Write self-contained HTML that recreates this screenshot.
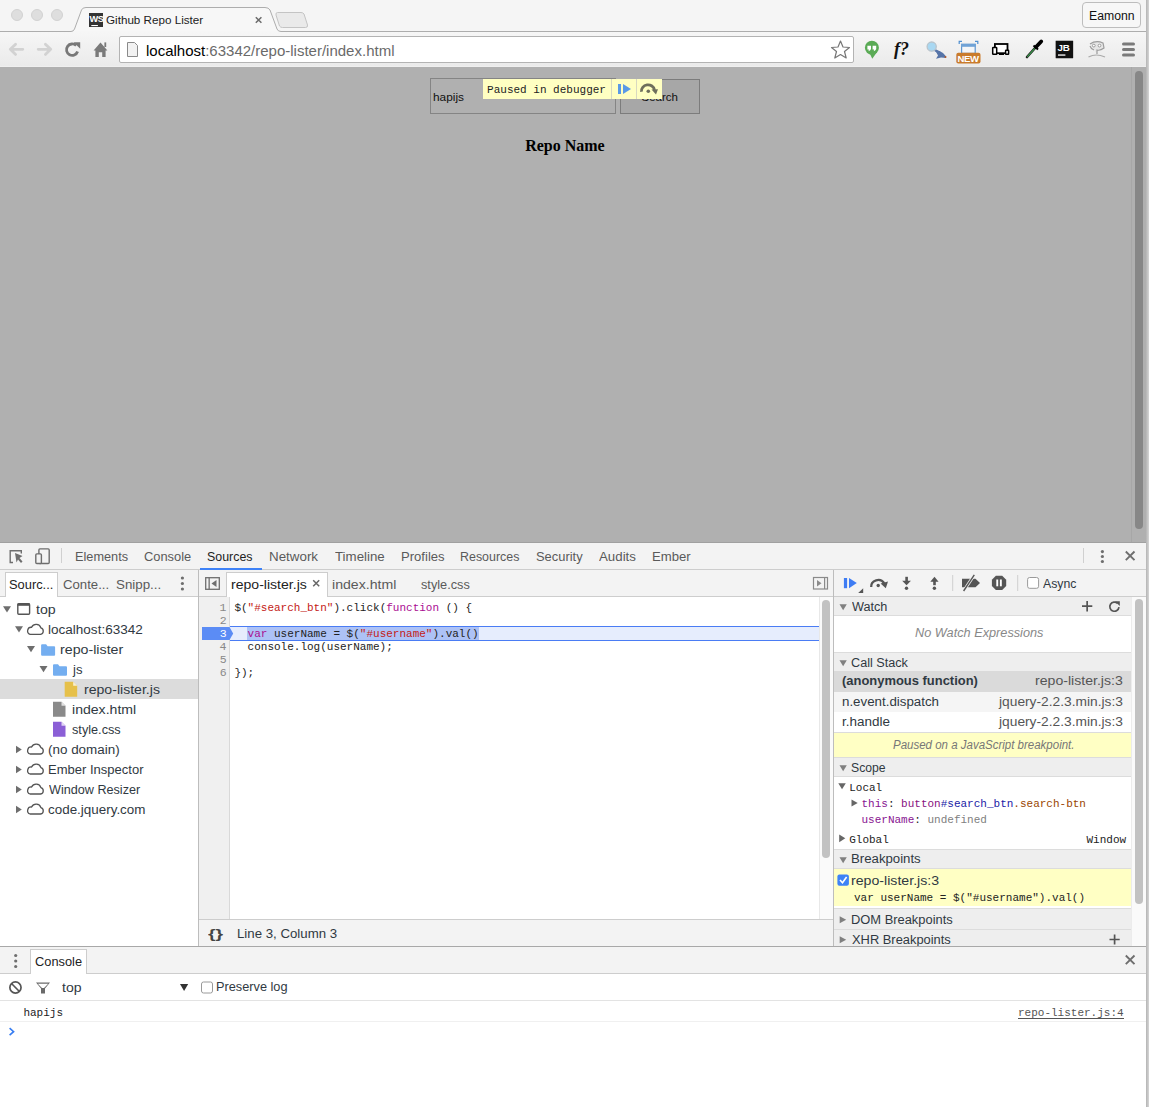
<!DOCTYPE html>
<html><head><meta charset="utf-8">
<style>
*{box-sizing:border-box}
html,body{margin:0;padding:0;width:1149px;height:1107px;overflow:hidden;background:#fff;font-family:"Liberation Sans",sans-serif}
.a{position:absolute}
.t{position:absolute;white-space:pre;line-height:1}
svg{position:absolute;overflow:visible}
.mono{font-family:'Liberation Mono',monospace}
.serif{font-family:'Liberation Serif',serif}
</style></head><body>

<!-- BROWSER CHROME -->
<div class="a" style="left:0;top:0;width:1146px;height:32px;background:#f5f5f5"></div>
<div class="a" style="left:11px;top:9px;width:12px;height:12px;border-radius:50%;background:#dedede;border:1px solid #d2d2d2"></div>
<div class="a" style="left:31px;top:9px;width:12px;height:12px;border-radius:50%;background:#dedede;border:1px solid #d2d2d2"></div>
<div class="a" style="left:51px;top:9px;width:12px;height:12px;border-radius:50%;background:#dedede;border:1px solid #d2d2d2"></div>
<svg style="left:0;top:0" width="1149" height="33">
  <path d="M0 31.5 H71 Q73.5 31.5 74.5 29 L81.5 10 Q82.5 7.5 86 7.5 H265 Q268.5 7.5 270 10 L277 29 Q278 31.5 281 31.5 H1146" fill="#f7f7f7" stroke="#adadad" stroke-width="1"/>
  <path d="M277.5 12.5 H301 Q303 12.5 304 14 L307.5 25 Q308 27.5 305.5 27.5 H282.5 Q280.5 27.5 279.5 26 L276 15 Q275.5 12.5 277.5 12.5 Z" fill="#eaeaea" stroke="#c4c4c4" stroke-width="1"/>
  <rect x="89" y="13" width="14" height="14" fill="#333"/>
  <text x="89.6" y="21.8" font-family="Liberation Sans" font-weight="bold" font-size="9.2" letter-spacing="-0.6" fill="#fff">WS</text>
  <rect x="91.3" y="25" width="6.6" height="1.1" fill="#fff"/>
  <path d="M255.8 17.2 L261.4 22.8 M261.4 17.2 L255.8 22.8" stroke="#6a6a6a" stroke-width="1.5"/>
</svg>
<div class="a" style="left:1082px;top:2px;width:59px;height:26px;border:1px solid #bdbdbd;border-radius:4px;background:#f7f7f7"></div>
<div class="a" style="left:0;top:32px;width:1146px;height:35px;background:linear-gradient(#f6f6f6,#eaeaea)"></div>
<div class="a" style="left:0;top:66px;width:1146px;height:1px;background:#efefef"></div>
<svg style="left:0;top:0" width="120" height="67">
  <g stroke="#d2d2d2" stroke-width="2.8" fill="none" stroke-linecap="round" stroke-linejoin="round">
    <path d="M10.3 49.3 H22.8 M15.6 44.2 L10.3 49.3 L15.6 54.4"/>
    <path d="M38.2 49.3 H50.7 M45.4 44.2 L50.7 49.3 L45.4 54.4"/>
  </g>
  <path d="M76.2 45.6 A5.7 5.7 0 1 0 77.6 51.5" stroke="#777" stroke-width="2.8" fill="none"/>
  <path d="M73.6 42.2 L80.2 42.2 L80.2 48.8 Z" fill="#777"/>
  <path d="M93.6 50.6 L100.5 42.6 L107.4 50.6 H105.6 V57 H102.2 V52.3 H98.8 V57 H95.4 V50.6 Z" fill="#7a7a7a"/>
  <rect x="104.4" y="42.4" width="1.8" height="4.6" fill="#7a7a7a"/>
</svg>
<div class="a" style="left:119px;top:36px;width:735px;height:27px;background:#fff;border:1px solid #b3b3b3;border-radius:2px"></div>
<svg style="left:126px;top:41px" width="14" height="17">
  <path d="M1.5 1.5 H8.5 L11.5 4.5 V15.5 H1.5 Z" fill="#f2f2f2" stroke="#8a8a8a" stroke-width="1"/>
</svg>
<svg style="left:830px;top:39px" width="22" height="21">
  <path d="M10.5 2 L13 8 L19.5 8.5 L14.5 12.5 L16.2 19 L10.5 15.5 L4.8 19 L6.5 12.5 L1.5 8.5 L8 8 Z" fill="#fff" stroke="#777" stroke-width="1.2" stroke-linejoin="round"/>
</svg>
<svg style="left:0;top:0" width="1146" height="67">
  <!-- hangouts -->
  <circle cx="871.9" cy="47.7" r="7" fill="#5aaa55"/>
  <path d="M869.5 53 L872.3 58.7 L877 52 Z" fill="#5aaa55"/>
  <path d="M867.4 45.8 H871 V49 Q870.6 50.6 868.6 51.2 L868.8 49.6 H867.4 Z" fill="#fff"/>
  <path d="M872.6 45.8 H876.2 V49 Q875.8 50.6 873.8 51.2 L874 49.6 H872.6 Z" fill="#fff"/>
  <!-- f? -->
  <text x="894" y="54.6" font-family="Liberation Serif" font-style="italic" font-weight="bold" font-size="18" fill="#111">f?</text>
  <!-- magnifier -->
  <path d="M935 50 Q940 50.5 943 53 Q946 55.5 946 58 L941 57.5 L936 58.7 L938 55.5 Z" fill="#5674a8"/>
  <path d="M934 49.5 L940 53" stroke="#5674a8" stroke-width="2.4"/>
  <circle cx="931.7" cy="46.6" r="4.6" fill="#a9d8f2" stroke="#b9c4cc" stroke-width="1.3"/>
  <circle cx="945.5" cy="57" r="1" fill="#b0582a"/>
  <!-- NEW -->
  <path d="M959.2 44 V41.3 H962" fill="none" stroke="#4f8fd0" stroke-width="1.2"/>
  <path d="M975 41.3 H977.8 V44" fill="none" stroke="#4f8fd0" stroke-width="1.2"/>
  <rect x="961.6" y="44.4" width="13.6" height="9" fill="#f4f6f8" stroke="#5f97cf" stroke-width="1.2"/>
  <rect x="961" y="43.8" width="14.8" height="3" fill="#6fa2d6"/>
  <rect x="956.3" y="52.8" width="24.2" height="10.6" rx="2" fill="#c97b2c"/>
  <text x="957.4" y="61.9" font-family="Liberation Sans" font-weight="bold" font-size="9.6" letter-spacing="-0.3" fill="#fff">NEW</text>
  <!-- devices -->
  <rect x="994.9" y="44" width="12.6" height="9.2" fill="#fff" stroke="#000" stroke-width="1.8"/>
  <rect x="992.7" y="47.5" width="4" height="6.8" rx="0.6" fill="#fff" stroke="#000" stroke-width="1.5"/>
  <rect x="1005.6" y="50.3" width="3" height="4" rx="0.5" fill="#fff" stroke="#000" stroke-width="1.5"/>
  <path d="M999 54.3 H1004 M1001.5 53 V54.5" stroke="#000" stroke-width="1.3"/>
  <!-- eyedropper -->
  <path d="M1027 57 L1035.5 47.5" stroke="#222" stroke-width="2.6" stroke-linecap="round"/>
  <path d="M1027.2 56.8 L1035.2 47.8" stroke="#3a9a4a" stroke-width="1.2"/>
  <path d="M1033.5 45.5 L1038 49.5" stroke="#000" stroke-width="2"/>
  <path d="M1036 47 L1041.2 41.5" stroke="#000" stroke-width="3.8" stroke-linecap="round"/>
  <!-- JB -->
  <rect x="1055" y="40.2" width="18.8" height="18.6" fill="#fff"/>
  <rect x="1055.6" y="40.7" width="17.6" height="17.6" fill="#111"/>
  <text x="1057.6" y="50.9" font-family="Liberation Sans" font-weight="bold" font-size="9.8" letter-spacing="-0.2" fill="#fff">JB</text>
  <rect x="1058" y="54.4" width="7.4" height="1.3" fill="#fff"/>
  <!-- elephant -->
  <path d="M1090 44 Q1096 40 1103 43 L1104 48 Q1100 51 1097 50 L1097 54 M1094 50 Q1091 49 1090 46" fill="#e6e6e6" stroke="#9c9c9c" stroke-width="1.2"/>
  <circle cx="1093.8" cy="45.6" r="1.4" fill="#fff" stroke="#8a8a8a" stroke-width="0.8"/>
  <circle cx="1099.5" cy="45.6" r="1.4" fill="#fff" stroke="#8a8a8a" stroke-width="0.8"/>
  <path d="M1088.5 57 Q1096 53 1105 57" stroke="#aaa" stroke-width="1.2" fill="none"/>
  <!-- hamburger -->
  <rect x="1122" y="42.5" width="13" height="3" rx="1.5" fill="#7a7a7a"/>
  <rect x="1122" y="48" width="13" height="3" rx="1.5" fill="#7a7a7a"/>
  <rect x="1122" y="53.5" width="13" height="3" rx="1.5" fill="#7a7a7a"/>
</svg>
<div class="a" style="left:1146px;top:0;width:3px;height:1107px;background:linear-gradient(90deg,#b4b4b4,#d6d6d6)"></div>

<div class="t" style="left:106.02px;top:14.5px;font-family:'Liberation Sans',sans-serif;font-size:11.5px;color:#222;transform:scaleX(1.0136);transform-origin:0 0">Github Repo Lister</div>
<div class="t" style="left:1088.62px;top:9.899999999999999px;font-family:'Liberation Sans',sans-serif;font-size:12px;color:#111;transform:scaleX(1.0196);transform-origin:0 0">Eamonn</div>
<div class="t" style="left:146px;top:43px;font-size:15px;color:#000">localhost<span style="color:#6a6a6a">:63342/repo-lister/index.html</span></div>
<div class="a" style="left:0;top:67px;width:1146px;height:476px;background:#b0b0b0"></div>
<div class="a" style="left:1131px;top:67px;width:1px;height:476px;background:#a7a7a7"></div>
<div class="a" style="left:1135px;top:71px;width:8px;height:458px;border-radius:4px;background:#878787"></div>
<div class="a" style="left:430px;top:78px;width:186px;height:36px;border:1px solid #848484;background:#b0b0b0"></div>
<div class="a" style="left:620px;top:79px;width:80px;height:35px;border:1px solid #7c7c7c;background:#a7a7a7"></div>

<div class="t" style="left:432.67px;top:91.9px;font-family:'Liberation Sans',sans-serif;font-size:11.5px;color:#111;transform:scaleX(1.0324);transform-origin:0 0">hapijs</div>
<div class="t" style="left:641.48px;top:91.9px;font-family:'Liberation Sans',sans-serif;font-size:11.5px;color:#111">Search</div>
<div class="t" style="left:525.16px;top:137.9px;font-family:'Liberation Serif',serif;font-size:16px;color:#000;font-weight:bold">Repo Name</div>
<div class="a" style="left:483px;top:79px;width:179px;height:20px;background:#ffffc2"></div>
<div class="a" style="left:611px;top:79px;width:1px;height:20px;background:#d8d8c0"></div>
<div class="a" style="left:636px;top:79px;width:1px;height:20px;background:#d8d8c0"></div>
<svg style="left:612px;top:79px" width="50" height="20">
  <rect x="6" y="5" width="3" height="10" fill="#5a9ae6"/>
  <path d="M11 5 L19 10 L11 15 Z" fill="#5a9ae6"/>
  <path d="M29.5 12.8 A6.5 6 0 0 1 42.5 11" stroke="#6e6e5c" stroke-width="2.8" fill="none"/>
  <path d="M39.5 10.5 L46 10.2 L44 15.5 Z" fill="#6e6e5c"/>
  <circle cx="36.3" cy="12.2" r="1.8" fill="#6e6e5c"/>
</svg>
<div class="t" style="left:487.12px;top:85px;font-family:'Liberation Mono',monospace;font-size:11px;color:#222">Paused in debugger</div>
<div class="a" style="left:0px;top:542px;width:1146px;height:1px;background:#a0a0a0;"></div>
<div class="a" style="left:0px;top:543px;width:1146px;height:26px;background:#f3f3f3;"></div>
<div class="a" style="left:0px;top:569px;width:1146px;height:1px;background:#cdcdcd;"></div>
<svg style="left:0;top:543px" width="1146" height="27">
 <g fill="none" stroke="#6e6e6e" stroke-width="1.4">
  <path d="M13 19.5 H10.2 V7.7 H21.3 V10.5"/>
 </g>
 <path d="M15 10 L22.5 13 L19.5 15 L22.5 18.5 L21 20 L18 16.5 L16.5 19.5 Z" fill="#6e6e6e"/>
 <rect x="38.9" y="5.9" width="10.3" height="14.6" rx="1" fill="none" stroke="#6e6e6e" stroke-width="1.4"/>
 <rect x="35.8" y="10.9" width="5.6" height="9.6" rx="1" fill="#f3f3f3" stroke="#6e6e6e" stroke-width="1.4"/>
 <rect x="61" y="5" width="1" height="15" fill="#d0d0d0"/>
 <rect x="1083" y="5" width="1" height="15" fill="#d0d0d0"/>
 <circle cx="1102.4" cy="8.6" r="1.6" fill="#6e6e6e"/><circle cx="1102.4" cy="13.5" r="1.6" fill="#6e6e6e"/><circle cx="1102.4" cy="18.5" r="1.6" fill="#6e6e6e"/>
 <path d="M1125.8 8.5 L1134.5 17.2 M1134.5 8.5 L1125.8 17.2" stroke="#6e6e6e" stroke-width="1.9"/>
</svg>
<div class="a" style="left:200px;top:568px;width:62px;height:2px;background:#3e82f7;"></div>
<div class="t" style="left:75.18px;top:551px;font-family:'Liberation Sans',sans-serif;font-size:12.5px;color:#5a5a5a;transform:scaleX(1.0180);transform-origin:0 0">Elements</div>
<div class="t" style="left:144.36px;top:551px;font-family:'Liberation Sans',sans-serif;font-size:12.5px;color:#5a5a5a;transform:scaleX(1.0294);transform-origin:0 0">Console</div>
<div class="t" style="left:207.44px;top:551px;font-family:'Liberation Sans',sans-serif;font-size:12.5px;color:#222;transform:scaleX(0.9916);transform-origin:0 0">Sources</div>
<div class="t" style="left:268.93px;top:551px;font-family:'Liberation Sans',sans-serif;font-size:12.5px;color:#5a5a5a;transform:scaleX(1.0696);transform-origin:0 0">Network</div>
<div class="t" style="left:335.03px;top:551px;font-family:'Liberation Sans',sans-serif;font-size:12.5px;color:#5a5a5a;transform:scaleX(1.0623);transform-origin:0 0">Timeline</div>
<div class="t" style="left:401.05px;top:551px;font-family:'Liberation Sans',sans-serif;font-size:12.5px;color:#5a5a5a;transform:scaleX(1.0460);transform-origin:0 0">Profiles</div>
<div class="t" style="left:460.41px;top:551px;font-family:'Liberation Sans',sans-serif;font-size:12.5px;color:#5a5a5a;transform:scaleX(0.9946);transform-origin:0 0">Resources</div>
<div class="t" style="left:536.42px;top:551px;font-family:'Liberation Sans',sans-serif;font-size:12.5px;color:#5a5a5a;transform:scaleX(1.0323);transform-origin:0 0">Security</div>
<div class="t" style="left:599.00px;top:551px;font-family:'Liberation Sans',sans-serif;font-size:12.5px;color:#5a5a5a;transform:scaleX(1.0638);transform-origin:0 0">Audits</div>
<div class="t" style="left:651.95px;top:551px;font-family:'Liberation Sans',sans-serif;font-size:12.5px;color:#5a5a5a;transform:scaleX(1.0517);transform-origin:0 0">Ember</div>
<div class="a" style="left:0px;top:570px;width:198px;height:26px;background:#f3f3f3;"></div>
<div class="a" style="left:0px;top:596px;width:198px;height:1px;background:#cdcdcd;"></div>
<div class="a" style="left:198px;top:570px;width:1px;height:377px;background:#bdbdbd;"></div>
<div class="a" style="left:5px;top:572px;width:53px;height:25px;background:#fff;border:1px solid #cdcdcd;border-bottom:none"></div>
<div class="t" style="left:8.82px;top:579px;font-family:'Liberation Sans',sans-serif;font-size:12.5px;color:#222;transform:scaleX(1.0296);transform-origin:0 0">Sourc...</div>
<div class="t" style="left:62.64px;top:579px;font-family:'Liberation Sans',sans-serif;font-size:12.5px;color:#5a5a5a;transform:scaleX(1.0548);transform-origin:0 0">Conte...</div>
<div class="t" style="left:116.40px;top:579px;font-family:'Liberation Sans',sans-serif;font-size:12.5px;color:#5a5a5a;transform:scaleX(1.0667);transform-origin:0 0">Snipp...</div>
<svg style="left:0;top:570px" width="198" height="27">
 <circle cx="182.4" cy="8" r="1.6" fill="#6e6e6e"/><circle cx="182.4" cy="13.5" r="1.6" fill="#6e6e6e"/><circle cx="182.4" cy="19" r="1.6" fill="#6e6e6e"/>
</svg>
<div class="a" style="left:0px;top:597px;width:198px;height:350px;background:#fff;"></div>
<div class="a" style="left:0px;top:679px;width:198px;height:20px;background:#dcdcdc;"></div>
<svg style="left:0;top:0" width="198" height="1107">
<path d="M3 606.2 H11 L7.0 612.5 Z" fill="#6e6e6e"/>
<rect x="17.8" y="603.8" width="11.8" height="10.4" rx="1" fill="none" stroke="#555" stroke-width="1.4"/><rect x="17.5" y="603.5" width="12.5" height="2.3" fill="#555"/>
<path d="M15 626.2 H23 L19.0 632.4 Z" fill="#6e6e6e"/>
<path transform="translate(26.1,623.3)" d="M4 11 H14.5 A3.3 3.3 0 0 0 14.8 4.6 A5 5 0 0 0 5.5 4 A3.6 3.6 0 0 0 4 11 Z" fill="none" stroke="#555" stroke-width="1.3"/>
<path d="M27 646.1 H35 L31.0 652.2 Z" fill="#6e6e6e"/>
<path transform="translate(41.1,644.2)" d="M0 1 Q0 0 1 0 H5 L6.5 2 H13 Q14 2 14 3 V10.5 Q14 11.5 13 11.5 H1 Q0 11.5 0 10.5 Z" fill="#74aef0"/>
<path d="M39.5 666.1 H47.5 L43.5 672.2 Z" fill="#6e6e6e"/>
<path transform="translate(53,664.2)" d="M0 1 Q0 0 1 0 H5 L6.5 2 H13 Q14 2 14 3 V10.5 Q14 11.5 13 11.5 H1 Q0 11.5 0 10.5 Z" fill="#74aef0"/>
<g transform="translate(64.7,681.7)"><path d="M0 0 H8.5 L12.5 4 V15 H0 Z" fill="#e6c04a"/><path d="M8.5 0 V4 H12.5 Z" fill="#fff" opacity="0.75"/></g>
<g transform="translate(53,701.7)"><path d="M0 0 H8.5 L12.5 4 V15 H0 Z" fill="#8a8a8a"/><path d="M8.5 0 V4 H12.5 Z" fill="#fff" opacity="0.75"/></g>
<g transform="translate(53,721.7)"><path d="M0 0 H8.5 L12.5 4 V15 H0 Z" fill="#8b5fd6"/><path d="M8.5 0 V4 H12.5 Z" fill="#fff" opacity="0.75"/></g>
<path d="M16 745.7 L21.8 749.5 L16 753.3 Z" fill="#6e6e6e"/>
<path transform="translate(26.1,743.0)" d="M4 11 H14.5 A3.3 3.3 0 0 0 14.8 4.6 A5 5 0 0 0 5.5 4 A3.6 3.6 0 0 0 4 11 Z" fill="none" stroke="#555" stroke-width="1.3"/>
<path d="M16 765.7 L21.8 769.5 L16 773.3 Z" fill="#6e6e6e"/>
<path transform="translate(26.1,763.0)" d="M4 11 H14.5 A3.3 3.3 0 0 0 14.8 4.6 A5 5 0 0 0 5.5 4 A3.6 3.6 0 0 0 4 11 Z" fill="none" stroke="#555" stroke-width="1.3"/>
<path d="M16 785.7 L21.8 789.5 L16 793.3 Z" fill="#6e6e6e"/>
<path transform="translate(26.1,783.0)" d="M4 11 H14.5 A3.3 3.3 0 0 0 14.8 4.6 A5 5 0 0 0 5.5 4 A3.6 3.6 0 0 0 4 11 Z" fill="none" stroke="#555" stroke-width="1.3"/>
<path d="M16 805.7 L21.8 809.5 L16 813.3 Z" fill="#6e6e6e"/>
<path transform="translate(26.1,803.0)" d="M4 11 H14.5 A3.3 3.3 0 0 0 14.8 4.6 A5 5 0 0 0 5.5 4 A3.6 3.6 0 0 0 4 11 Z" fill="none" stroke="#555" stroke-width="1.3"/>
</svg>
<div class="t" style="left:36.29px;top:604px;font-family:'Liberation Sans',sans-serif;font-size:12.5px;color:#303942;transform:scaleX(1.1326);transform-origin:0 0">top</div>
<div class="t" style="left:47.82px;top:624px;font-family:'Liberation Sans',sans-serif;font-size:12.5px;color:#303942;transform:scaleX(1.0821);transform-origin:0 0">localhost:63342</div>
<div class="t" style="left:59.68px;top:644px;font-family:'Liberation Sans',sans-serif;font-size:12.5px;color:#303942;transform:scaleX(1.1381);transform-origin:0 0">repo-lister</div>
<div class="t" style="left:72.53px;top:664px;font-family:'Liberation Sans',sans-serif;font-size:12.5px;color:#303942;transform:scaleX(1.0479);transform-origin:0 0">js</div>
<div class="t" style="left:83.88px;top:684px;font-family:'Liberation Sans',sans-serif;font-size:12.5px;color:#303942;transform:scaleX(1.1267);transform-origin:0 0">repo-lister.js</div>
<div class="t" style="left:71.68px;top:704px;font-family:'Liberation Sans',sans-serif;font-size:12.5px;color:#303942;transform:scaleX(1.1263);transform-origin:0 0">index.html</div>
<div class="t" style="left:72.22px;top:724px;font-family:'Liberation Sans',sans-serif;font-size:12.5px;color:#303942;transform:scaleX(1.0164);transform-origin:0 0">style.css</div>
<div class="t" style="left:47.79px;top:744px;font-family:'Liberation Sans',sans-serif;font-size:12.5px;color:#303942;transform:scaleX(1.0738);transform-origin:0 0">(no domain)</div>
<div class="t" style="left:47.56px;top:764px;font-family:'Liberation Sans',sans-serif;font-size:12.5px;color:#303942;transform:scaleX(1.0420);transform-origin:0 0">Ember Inspector</div>
<div class="t" style="left:48.54px;top:784px;font-family:'Liberation Sans',sans-serif;font-size:12.5px;color:#303942;transform:scaleX(1.0100);transform-origin:0 0">Window Resizer</div>
<div class="t" style="left:48.06px;top:804px;font-family:'Liberation Sans',sans-serif;font-size:12.5px;color:#303942;transform:scaleX(1.0737);transform-origin:0 0">code.jquery.com</div>
<div class="a" style="left:199px;top:570px;width:634px;height:26px;background:#f3f3f3;"></div>
<div class="a" style="left:199px;top:596px;width:634px;height:1px;background:#cdcdcd;"></div>
<div class="a" style="left:226px;top:572px;width:102px;height:25px;background:#fff;border:1px solid #cdcdcd;border-bottom:none"></div>
<div class="t" style="left:230.69px;top:579px;font-family:'Liberation Sans',sans-serif;font-size:12.5px;color:#222;transform:scaleX(1.1251);transform-origin:0 0">repo-lister.js</div>
<div class="t" style="left:332.38px;top:579px;font-family:'Liberation Sans',sans-serif;font-size:12.5px;color:#5a5a5a;transform:scaleX(1.1281);transform-origin:0 0">index.html</div>
<div class="t" style="left:421.02px;top:579px;font-family:'Liberation Sans',sans-serif;font-size:12.5px;color:#5a5a5a;transform:scaleX(1.0186);transform-origin:0 0">style.css</div>
<svg style="left:0;top:0" width="840" height="600">
 <rect x="205.7" y="577.7" width="13.6" height="11.6" fill="none" stroke="#6e6e6e" stroke-width="1.3"/>
 <rect x="208.5" y="577.7" width="1.3" height="11.6" fill="#6e6e6e"/>
 <path d="M216.5 580 V587 L211.5 583.5 Z" fill="#6e6e6e"/>
 <path d="M313.2 580.2 L319.2 586.2 M319.2 580.2 L313.2 586.2" stroke="#666" stroke-width="1.5"/>
 <rect x="813.5" y="577.5" width="14" height="11.5" fill="none" stroke="#8a8a8a" stroke-width="1.2"/>
 <rect x="824" y="577.5" width="1.2" height="11.5" fill="#8a8a8a"/>
 <path d="M817 580 V586.5 L821.5 583.25 Z" fill="#8a8a8a"/>
</svg>
<div class="a" style="left:199px;top:597px;width:634px;height:322px;background:#fff;"></div>
<div class="a" style="left:199px;top:597px;width:30px;height:322px;background:#f0f0f0;"></div>
<div class="a" style="left:229px;top:597px;width:1px;height:322px;background:#d9d9d9;"></div>
<div class="a" style="left:230px;top:626px;width:589px;height:15px;background:#e6edfd;border-top:1px solid #4a7cf4;border-bottom:1px solid #4a7cf4"></div>
<div class="a" style="left:247px;top:627px;width:232px;height:13px;background:#adc2f6;"></div>
<svg style="left:0;top:0" width="840" height="700">
 <path d="M202 627 H229.5 L233.2 633.5 L229.5 640 H202 Z" fill="#5b8cf5"/>
</svg>
<div class="a" style="left:819px;top:597px;width:14px;height:322px;background:#fafafa;border-left:1px solid #e8e8e8"></div>
<div class="a" style="left:822px;top:600px;width:8px;height:258px;background:#c2c2c2;border-radius:4px"></div>
<div class="t" style="left:219.58px;top:602px;font-family:'Liberation Mono',monospace;font-size:11.5px;color:#888">1</div>
<div class="t" style="left:219.81px;top:615px;font-family:'Liberation Mono',monospace;font-size:11.5px;color:#888">2</div>
<div class="t" style="left:219.75px;top:628px;font-family:'Liberation Mono',monospace;font-size:11.5px;color:#fff">3</div>
<div class="t" style="left:219.58px;top:641px;font-family:'Liberation Mono',monospace;font-size:11.5px;color:#888">4</div>
<div class="t" style="left:219.75px;top:654px;font-family:'Liberation Mono',monospace;font-size:11.5px;color:#888">5</div>
<div class="t" style="left:219.75px;top:667px;font-family:'Liberation Mono',monospace;font-size:11.5px;color:#888">6</div>
<div class="t" style="left:234.4px;top:603px;font-family:'Liberation Mono',monospace;font-size:11px;color:#222">$(<span style="color:#c41a16">"#search_btn"</span>).click(<span style="color:#aa0d91">function</span> () {</div>
<div class="t" style="left:234.4px;top:616px;font-family:'Liberation Mono',monospace;font-size:11px;color:#222"></div>
<div class="t" style="left:234.4px;top:629px;font-family:'Liberation Mono',monospace;font-size:11px;color:#222">  <span style="color:#aa0d91">var</span> userName = $(<span style="color:#c41a16">"#username"</span>).val()</div>
<div class="t" style="left:234.4px;top:642px;font-family:'Liberation Mono',monospace;font-size:11px;color:#222">  console.log(userName);</div>
<div class="t" style="left:234.4px;top:655px;font-family:'Liberation Mono',monospace;font-size:11px;color:#222"></div>
<div class="t" style="left:234.4px;top:668px;font-family:'Liberation Mono',monospace;font-size:11px;color:#222">});</div>
<div class="a" style="left:199px;top:919px;width:634px;height:1px;background:#cdcdcd;"></div>
<div class="a" style="left:199px;top:920px;width:634px;height:26px;background:#f3f3f3;"></div>
<div class="t" style="left:207.91px;top:927.5px;font-family:'Liberation Sans',sans-serif;font-size:12.5px;color:#444;font-weight:bold;transform:scaleX(1.5573);transform-origin:0 0">{}</div>
<div class="t" style="left:237.44px;top:927.5px;font-family:'Liberation Sans',sans-serif;font-size:12.5px;color:#303942;transform:scaleX(1.0591);transform-origin:0 0">Line 3, Column 3</div>
<div class="a" style="left:833px;top:570px;width:1px;height:377px;background:#bdbdbd;"></div>
<div class="a" style="left:834px;top:570px;width:312px;height:26px;background:#f3f3f3;"></div>
<div class="a" style="left:834px;top:596px;width:312px;height:1px;background:#cdcdcd;"></div>
<svg style="left:0;top:0" width="1146" height="600">
 <rect x="843.9" y="578" width="3.2" height="10.2" fill="#3e7cf3"/>
 <path d="M849 578 L856.8 583.1 L849 588.2 Z" fill="#3e7cf3"/>
 <path d="M858.2 593 L863.2 588.3 V593 Z" fill="#555"/>
 <path d="M871.2 587 A7 6.6 0 0 1 884.2 583.2" fill="none" stroke="#555" stroke-width="2.3"/>
 <path d="M880.6 583.6 L888 581.4 L885.8 588.3 Z" fill="#555"/>
 <circle cx="878.2" cy="585.5" r="1.7" fill="#555"/>
 <rect x="905.3" y="576.8" width="2.6" height="5" fill="#555"/>
 <path d="M902.2 580.8 H910.9 L906.55 585.2 Z" fill="#555"/>
 <circle cx="906.5" cy="588.2" r="1.7" fill="#555"/>
 <path d="M930.3 581.7 H938.6 L934.45 576.8 Z" fill="#555"/>
 <rect x="933.2" y="581" width="2.6" height="4.2" fill="#555"/>
 <circle cx="934.4" cy="588.2" r="1.7" fill="#555"/>
 <rect x="952.2" y="575" width="1" height="16" fill="#cfcfcf"/>
 <path d="M962 578.8 H975.5 L980 583 L975.5 587.3 H962 Z" fill="#555"/>
 <path d="M974.3 574.8 L963.6 591" stroke="#f3f3f3" stroke-width="3"/>
 <path d="M974.3 574.8 L963.6 591" stroke="#555" stroke-width="1.4"/>
 <path d="M995.9 575.7 H1002.2 L1006.2 579.7 V586 L1002.2 590 H995.9 L991.9 586 V579.7 Z" fill="#555"/>
 <rect x="996.3" y="579.5" width="1.9" height="6.8" fill="#fff"/><rect x="999.9" y="579.5" width="1.9" height="6.8" fill="#fff"/>
 <rect x="1017.2" y="575" width="1" height="16" fill="#cfcfcf"/>
 <rect x="1027.6" y="577.5" width="11" height="10.8" rx="2" fill="#fff" stroke="#9a9a9a" stroke-width="1"/>
</svg>
<div class="t" style="left:1043.00px;top:578px;font-family:'Liberation Sans',sans-serif;font-size:12.5px;color:#303942;transform:scaleX(0.9837);transform-origin:0 0">Async</div>
<div class="a" style="left:834px;top:597px;width:297px;height:349px;background:#fff;"></div>
<div class="a" style="left:1131px;top:597px;width:15px;height:349px;background:#fafafa;border-left:1px solid #ececec"></div>
<div class="a" style="left:1135px;top:599px;width:8px;height:305px;background:#c2c2c2;border-radius:4px"></div>
<div class="a" style="left:834px;top:597px;width:297px;height:1px;background:#dcdcdc;"></div>
<div class="a" style="left:834px;top:597px;width:297px;height:18px;background:#eeeeee;"></div>
<div class="a" style="left:834px;top:615px;width:297px;height:1px;background:#dcdcdc;"></div>
<div class="t" style="left:851.94px;top:600.7px;font-family:'Liberation Sans',sans-serif;font-size:12.5px;color:#303942;transform:scaleX(1.0128);transform-origin:0 0">Watch</div>
<div class="a" style="left:834px;top:652px;width:297px;height:1px;background:#dcdcdc;"></div>
<div class="a" style="left:834px;top:653px;width:297px;height:18px;background:#eeeeee;"></div>
<div class="a" style="left:834px;top:671px;width:297px;height:1px;background:#dcdcdc;"></div>
<div class="t" style="left:851.37px;top:657px;font-family:'Liberation Sans',sans-serif;font-size:12.5px;color:#303942;transform:scaleX(1.0121);transform-origin:0 0">Call Stack</div>
<div class="a" style="left:834px;top:671px;width:297px;height:21px;background:#dadada;"></div>
<div class="a" style="left:834px;top:692px;width:297px;height:20px;background:#f5f5f5;"></div>
<div class="a" style="left:834px;top:732px;width:297px;height:1px;background:#dcdcdc;"></div>
<div class="a" style="left:834px;top:733px;width:297px;height:24px;background:#ffffc4;"></div>
<div class="a" style="left:834px;top:757px;width:297px;height:1px;background:#dcdcdc;"></div>
<div class="a" style="left:834px;top:758px;width:297px;height:18px;background:#eeeeee;"></div>
<div class="a" style="left:834px;top:776px;width:297px;height:1px;background:#dcdcdc;"></div>
<div class="t" style="left:851.45px;top:761.7px;font-family:'Liberation Sans',sans-serif;font-size:12.5px;color:#303942;transform:scaleX(0.9763);transform-origin:0 0">Scope</div>
<div class="a" style="left:834px;top:849px;width:297px;height:1px;background:#dcdcdc;"></div>
<div class="a" style="left:834px;top:850px;width:297px;height:18px;background:#eeeeee;"></div>
<div class="a" style="left:834px;top:868px;width:297px;height:1px;background:#dcdcdc;"></div>
<div class="t" style="left:850.94px;top:853.3px;font-family:'Liberation Sans',sans-serif;font-size:12.5px;color:#303942;transform:scaleX(1.0563);transform-origin:0 0">Breakpoints</div>
<div class="a" style="left:834px;top:869px;width:297px;height:37px;background:#ffffc4;"></div>
<div class="a" style="left:834px;top:908px;width:297px;height:1px;background:#dcdcdc;"></div>
<div class="a" style="left:834px;top:909px;width:297px;height:20px;background:#eeeeee;"></div>
<div class="a" style="left:834px;top:929px;width:297px;height:1px;background:#dcdcdc;"></div>
<div class="t" style="left:850.97px;top:913.8px;font-family:'Liberation Sans',sans-serif;font-size:12.5px;color:#303942;transform:scaleX(1.0310);transform-origin:0 0">DOM Breakpoints</div>
<div class="a" style="left:834px;top:929px;width:297px;height:1px;background:#dcdcdc;"></div>
<div class="a" style="left:834px;top:930px;width:297px;height:16px;background:#eeeeee;"></div>
<div class="t" style="left:851.68px;top:933.5px;font-family:'Liberation Sans',sans-serif;font-size:12.5px;color:#303942;transform:scaleX(1.0302);transform-origin:0 0">XHR Breakpoints</div>
<svg style="left:0;top:0" width="1146" height="950">
 <path d="M839.5 604.3 H846.8 L843.15 610.3 Z" fill="#808080"/>
 <path d="M1082 606.2 H1092.3 M1087.15 601 V611.4" stroke="#555" stroke-width="1.7"/>
 <path d="M1117.6 603.3 A4.6 4.6 0 1 0 1119 607.2" fill="none" stroke="#555" stroke-width="1.7"/>
 <path d="M1114.8 601.2 L1119.8 601.2 L1119.8 606 Z" fill="#555"/>
 <path d="M839.5 660.3 H846.8 L843.15 666.3 Z" fill="#808080"/>
 <path d="M839.5 765.3 H846.8 L843.15 771.3 Z" fill="#808080"/>
 <path d="M838.3 783.3 H845.8 L842.05 789.3 Z" fill="#666"/>
 <path d="M851.5 799.4 L857.7 802.9 L851.5 806.4 Z" fill="#666"/>
 <path d="M839.2 834.4 L845.3 838.3 L839.2 842.2 Z" fill="#666"/>
 <path d="M839.5 857.3 H846.8 L843.15 863.3 Z" fill="#808080"/>
 <rect x="837.4" y="874.4" width="11.5" height="11.3" rx="2" fill="#3d82f6"/>
 <path d="M840 880 L842.5 882.8 L846.6 877" fill="none" stroke="#fff" stroke-width="1.6"/>
 <path d="M839.7 916.2 L846.2 919.7 L839.7 923.2 Z" fill="#808080"/>
 <path d="M839.7 936.2 L846.2 939.7 L839.7 943.2 Z" fill="#808080"/>
 <path d="M1109.5 939.5 H1119.7 M1114.6 934.4 V944.6" stroke="#555" stroke-width="1.7"/>
</svg>
<div class="t" style="left:915.42px;top:626.7px;font-family:'Liberation Sans',sans-serif;font-size:12.5px;color:#888;font-style:italic;transform:scaleX(1.0178);transform-origin:0 0">No Watch Expressions</div>
<div class="t" style="left:841.85px;top:675.2px;font-family:'Liberation Sans',sans-serif;font-size:12.5px;color:#303942;font-weight:bold;transform:scaleX(1.0354);transform-origin:0 0">(anonymous function)</div>
<div class="t" style="left:1035.08px;top:675.2px;font-family:'Liberation Sans',sans-serif;font-size:12.5px;color:#555;transform:scaleX(1.1281);transform-origin:0 0">repo-lister.js:3</div>
<div class="t" style="left:841.63px;top:696px;font-family:'Liberation Sans',sans-serif;font-size:12.5px;color:#303942;transform:scaleX(1.0652);transform-origin:0 0">n.event.dispatch</div>
<div class="t" style="left:998.84px;top:696px;font-family:'Liberation Sans',sans-serif;font-size:12.5px;color:#555;transform:scaleX(1.1017);transform-origin:0 0">jquery-2.2.3.min.js:3</div>
<div class="t" style="left:841.62px;top:716px;font-family:'Liberation Sans',sans-serif;font-size:12.5px;color:#303942;transform:scaleX(1.0783);transform-origin:0 0">r.handle</div>
<div class="t" style="left:998.84px;top:716px;font-family:'Liberation Sans',sans-serif;font-size:12.5px;color:#555;transform:scaleX(1.1017);transform-origin:0 0">jquery-2.2.3.min.js:3</div>
<div class="t" style="left:892.96px;top:738.6px;font-family:'Liberation Sans',sans-serif;font-size:12.5px;color:#777;font-style:italic;transform:scaleX(0.9195);transform-origin:0 0">Paused on a JavaScript breakpoint.</div>
<div class="t" style="left:849.2px;top:782.8px;font-family:'Liberation Mono',monospace;font-size:11px;color:#222">Local</div>
<div class="t" style="left:861.5px;top:799px;font-family:'Liberation Mono',monospace;font-size:11px;color:#222"><span style="color:#881391">this</span>: <span style="color:#881280">button</span><span style="color:#1a1aa6">#search_btn</span><span style="color:#994500">.search-btn</span></div>
<div class="t" style="left:861.5px;top:814.8px;font-family:'Liberation Mono',monospace;font-size:11px;color:#222"><span style="color:#881391">userName</span>: <span style="color:#808080">undefined</span></div>
<div class="t" style="left:849.2px;top:834.5px;font-family:'Liberation Mono',monospace;font-size:11px;color:#222">Global</div>
<div class="t" style="left:1086.5px;top:834.5px;font-family:'Liberation Mono',monospace;font-size:11px;color:#222">Window</div>
<div class="t" style="left:851.28px;top:875px;font-family:'Liberation Sans',sans-serif;font-size:12.5px;color:#303942;transform:scaleX(1.1320);transform-origin:0 0">repo-lister.js:3</div>
<div class="t" style="left:854px;top:892.9px;font-family:'Liberation Mono',monospace;font-size:11px;color:#222">var userName = $("#username").val()</div>
<div class="a" style="left:0px;top:946px;width:1146px;height:1px;background:#a8a8a8;"></div>
<div class="a" style="left:0px;top:947px;width:1146px;height:26px;background:#f3f3f3;"></div>
<div class="a" style="left:0px;top:973px;width:1146px;height:1px;background:#cdcdcd;"></div>
<div class="a" style="left:30px;top:949px;width:57px;height:25px;background:#fff;border:1px solid #cdcdcd;border-bottom:none"></div>
<div class="t" style="left:34.56px;top:955.8px;font-family:'Liberation Sans',sans-serif;font-size:12.5px;color:#222;transform:scaleX(1.0249);transform-origin:0 0">Console</div>
<div class="a" style="left:0px;top:974px;width:1146px;height:26px;background:#fff;"></div>
<div class="a" style="left:0px;top:1000px;width:1146px;height:1px;background:#e3e3e3;"></div>
<div class="a" style="left:0px;top:1001px;width:1146px;height:106px;background:#fff;"></div>
<div class="a" style="left:0px;top:1021px;width:1146px;height:1px;background:#f0f0f0;"></div>
<svg style="left:0;top:0" width="1146" height="1107">
 <circle cx="15.7" cy="955.5" r="1.6" fill="#6e6e6e"/><circle cx="15.7" cy="961" r="1.6" fill="#6e6e6e"/><circle cx="15.7" cy="966.5" r="1.6" fill="#6e6e6e"/>
 <path d="M1125.8 955.5 L1134.5 964.2 M1134.5 955.5 L1125.8 964.2" stroke="#6e6e6e" stroke-width="1.9"/>
 <circle cx="15.45" cy="987.5" r="5.6" fill="none" stroke="#555" stroke-width="1.7"/>
 <path d="M11.5 983.5 L19.4 991.5" stroke="#555" stroke-width="1.7"/>
 <path d="M36 982.5 H50 L45 988.5 V993.6 H41 V988.5 Z" fill="#6a6a6a"/>
 <path d="M37.8 983.7 H48.2 L44 988 H42 Z" fill="#fff"/>
 <path d="M180 984 H188.2 L184.1 991 Z" fill="#333"/>
 <rect x="201.5" y="982" width="11" height="11" rx="2" fill="#fff" stroke="#9a9a9a" stroke-width="1"/>
 <path d="M9.6 1028.2 L13.6 1031.7 L9.6 1035.2" fill="none" stroke="#367cf1" stroke-width="1.6"/>
</svg>
<div class="t" style="left:61.99px;top:981.5px;font-family:'Liberation Sans',sans-serif;font-size:12.5px;color:#303942;transform:scaleX(1.1266);transform-origin:0 0">top</div>
<div class="t" style="left:215.98px;top:981.3px;font-family:'Liberation Sans',sans-serif;font-size:12.5px;color:#303942;transform:scaleX(1.0194);transform-origin:0 0">Preserve log</div>
<div class="t" style="left:23.4px;top:1007.7px;font-family:'Liberation Mono',monospace;font-size:11px;color:#222">hapijs</div>
<div class="t" style="left:1018px;top:1007.7px;font-family:'Liberation Mono',monospace;font-size:11px;color:#545454">repo-lister.js:4</div>
<div class="a" style="left:1018px;top:1018px;width:106px;height:1px;background:#545454;"></div>
</body></html>
